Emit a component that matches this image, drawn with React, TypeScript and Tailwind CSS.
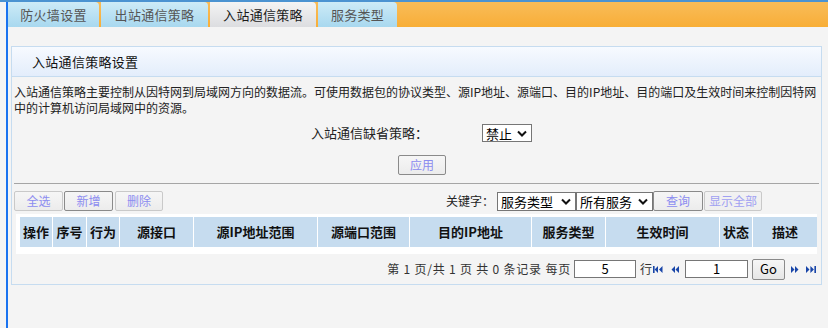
import { ReactNode } from 'react';

const FONT = { fontFamily: '"Microsoft YaHei", "Noto Sans CJK SC", "Liberation Sans", sans-serif' };

const tabs = [
  { label: '防火墙设置', w: 'w-[91px]' },
  { label: '出站通信策略', w: 'w-[107px]' },
  { label: '入站通信策略', w: 'w-[106px]', active: true },
  { label: '服务类型', w: 'w-[79px]' },
];

const columns = [
  { label: '操作', w: 'w-[32px]' },
  { label: '序号', w: 'w-[33px]' },
  { label: '行为', w: 'w-[32px]' },
  { label: '源接口', w: 'w-[73px]' },
  { label: '源IP地址范围', w: 'w-[123px]' },
  { label: '源端口范围', w: 'w-[91px]' },
  { label: '目的IP地址', w: 'w-[121px]' },
  { label: '服务类型', w: 'w-[73px]' },
  { label: '生效时间', w: 'w-[113px]' },
  { label: '状态', w: 'w-[32px]' },
  { label: '描述', w: 'w-[64px]' },
];

function Chevron() {
  return (
    <svg width="10" height="7" viewBox="0 0 10 7" className="shrink-0">
      <path d="M1 1.5 L5 5.5 L9 1.5" fill="none" stroke="#111" strokeWidth="2" />
    </svg>
  );
}

function FakeSelect({ label, className }: { label: string; className: string }) {
  return (
    <div
      className={`flex items-center justify-between border border-[#767676] bg-white pl-[3px] pr-[4px] text-[13px] leading-none text-black ${className}`}
    >
      <span>{label}</span>
      <Chevron />
    </div>
  );
}

function Btn({ children, className, dark }: { children: ReactNode; className: string; dark?: boolean }) {
  return (
    <div
      className={`flex h-[20px] items-center justify-center rounded-[2px] border bg-gradient-to-b from-[#f6f6f6] to-[#ececec] text-[12px] text-[#8c8cf0] ${
        dark ? 'border-[#8a8a8a]' : 'border-[#c9c9c9]'
      } ${className}`}
    >
      {children}
    </div>
  );
}

function NavIcon({ kind }: { kind: 'first' | 'prev' | 'next' | 'last' }) {
  const c = '#1845a8';
  if (kind === 'first')
    return (
      <svg width="10" height="7" viewBox="0 0 10 7">
        <rect x="0" y="0" width="1.6" height="7" fill={c} />
        <path d="M5 0 L1.6 3.5 L5 7Z M9.5 0 L6 3.5 L9.5 7Z" fill={c} />
      </svg>
    );
  if (kind === 'prev')
    return (
      <svg width="8" height="7" viewBox="0 0 8 7">
        <path d="M4 0 L0.5 3.5 L4 7Z M8 0 L4.5 3.5 L8 7Z" fill={c} />
      </svg>
    );
  if (kind === 'next')
    return (
      <svg width="8" height="7" viewBox="0 0 8 7">
        <path d="M0 0 L3.5 3.5 L0 7Z M4 0 L7.5 3.5 L4 7Z" fill={c} />
      </svg>
    );
  return (
    <svg width="10" height="7" viewBox="0 0 10 7">
      <path d="M0 0 L3.5 3.5 L0 7Z M4.4 0 L7.9 3.5 L4.4 7Z" fill={c} />
      <rect x="8.4" y="0" width="1.6" height="7" fill={c} />
    </svg>
  );
}

export default function App() {
  return (
    <div className="flex h-[328px] w-[828px] flex-col overflow-hidden bg-[#f4f4f4]" style={FONT}>
      <div className="h-[2px] bg-[#4b93d1]" />
      <div className="flex flex-1">
        <div className="w-[6px]" />
        <div className="w-[2px] bg-[#1a73f0]" />
        <div className="flex flex-1 flex-col">
          {/* tab strip */}
          <div className="flex h-[25px] gap-[2px] bg-gradient-to-b from-[#f8bc58] to-[#f8ae36]">
            {tabs.map((t) => (
              <div
                key={t.label}
                className={`flex items-center justify-center rounded-tr-[4px] text-[13px] tracking-[0.3px] ${t.w} ${
                  t.active
                    ? 'bg-gradient-to-b from-[#f4f4f4] to-[#dcdde0] text-[#1a1a1a]'
                    : 'bg-gradient-to-b from-[#cdebf7] to-[#a8d8ef] text-[#555]'
                }`}
              >
                {t.label}
              </div>
            ))}
          </div>

          {/* panel */}
          <div className="ml-[3px] mt-[19px] flex h-[239px] w-[811px] flex-col border border-[#c6dcf0]">
            <div className="flex h-[30px] shrink-0 items-center border-b border-[#c6dcf0] bg-gradient-to-b from-[#f7faff] to-[#e3edfb] pl-[20px] text-[13px] tracking-[0.3px] text-[#111]">
              入站通信策略设置
            </div>

            <div className="pl-[2px] pr-[2px] pt-[7px] text-[12px] leading-[16px] text-[#222]">
              入站通信策略主要控制从因特网到局域网方向的数据流。可使用数据包的协议类型、源IP地址、源端口、目的IP地址、目的端口及生效时间来控制因特网
              <br />
              中的计算机访问局域网中的资源。
            </div>

            <div className="mt-[8px] flex h-[18px] items-center">
              <div className="w-[416px] text-right text-[13px] text-[#222]">入站通信缺省策略：</div>
              <FakeSelect label="禁止" className="ml-[54px] h-[18px] w-[50px]" />
            </div>

            <div className="mt-[13px] pl-[386px]">
              <Btn className="w-[48px]" dark>
                应用
              </Btn>
            </div>

            <div className="mx-[2px] mt-[8px] h-px bg-[#a5a5a5]" />

            <div className="mt-[7px] flex h-[20px] items-center pl-[2px]">
              <Btn className="w-[49px]">全选</Btn>
              <Btn className="ml-[1px] w-[49px]" dark>
                新增
              </Btn>
              <Btn className="ml-[2px] w-[48px]">删除</Btn>
              <span className="ml-[283px] w-[51px] text-[12px] text-[#222]">关键字：</span>
              <FakeSelect label="服务类型" className="h-[19px] w-[79px]" />
              <FakeSelect label="所有服务" className="h-[19px] w-[77px]" />
              <Btn className="w-[50px]" dark>
                查询
              </Btn>
              <Btn className="ml-[1px] w-[58px] !from-[#f2f2f2] !to-[#efefef] !text-[#a0a0f2]">显示全部</Btn>
            </div>

            <div className="ml-[4px] mt-[3px] w-[801px] bg-white pb-[7px] pl-[4px] pt-[3px]">
              <div className="flex h-[30px] gap-px">
                {columns.map((c) => (
                  <div
                    key={c.label}
                    className={`flex items-center justify-center bg-[#c6dcef] text-[13px] font-bold text-[#111] ${c.w}`}
                  >
                    {c.label}
                  </div>
                ))}
              </div>
            </div>

            <div className="mt-[5px] flex h-[20px] items-center justify-end pr-[5px] text-[12px] text-[#333]">
              <span className="tracking-[0.8px]">第 1 页/共 1 页 共 0 条记录 每页</span>
              <div className="ml-[3px] flex h-[18px] w-[62px] items-center justify-center border border-[#767676] bg-white text-[13px] text-black">
                5
              </div>
              <span className="ml-[4px]">行</span>
              <span className="ml-[1px]">
                <NavIcon kind="first" />
              </span>
              <span className="ml-[8px]">
                <NavIcon kind="prev" />
              </span>
              <div className="ml-[6px] flex h-[18px] w-[63px] items-center justify-center border border-[#767676] bg-white text-[13px] text-black">
                1
              </div>
              <div className="ml-[4px] flex h-[21px] w-[33px] items-center justify-center rounded-[2px] border border-[#8a8a8a] bg-gradient-to-b from-[#f6f6f6] to-[#e6e6e6] text-[13px] text-black">
                Go
              </div>
              <span className="ml-[6px]">
                <NavIcon kind="next" />
              </span>
              <span className="ml-[7px]">
                <NavIcon kind="last" />
              </span>
            </div>
          </div>
        </div>
      </div>
    </div>
  );
}
